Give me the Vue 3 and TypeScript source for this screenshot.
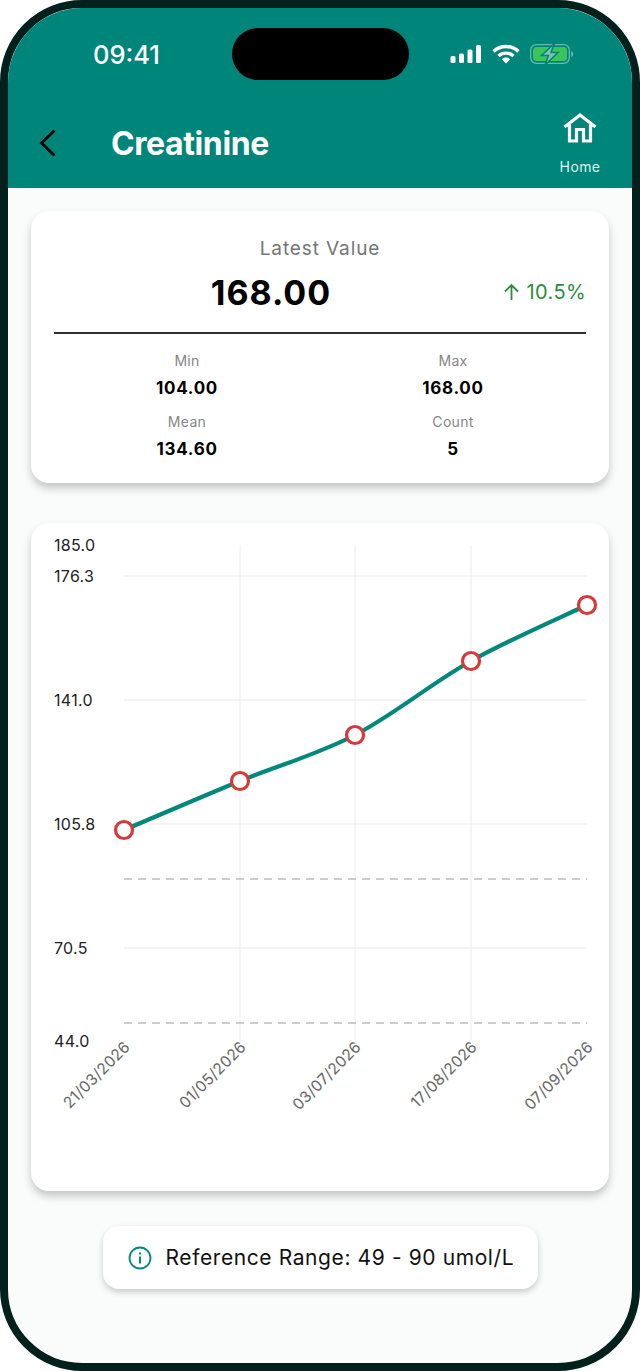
<template>
  <div class="phone">
    <div class="island"></div>
    <header class="top">
      <div class="status">
        <span class="time">09:41</span>
        <div class="status-icons">
          <svg width="32" height="20" viewBox="0 0 32 20">
            <rect x="0.5" y="12" width="5" height="7" rx="1.5" fill="#fff" />
            <rect x="9" y="9.5" width="5" height="9.5" rx="1.5" fill="#fff" />
            <rect x="17.5" y="5.5" width="5" height="13.5" rx="1.5" fill="#fff" />
            <rect x="26" y="1" width="5" height="18" rx="1.5" fill="#fff" />
          </svg>
          <svg width="28" height="20" viewBox="0 0 28 20">
            <path d="M1.5 7.5C8.5 .8 19.5 .8 26.5 7.5" fill="none" stroke="#fff" stroke-width="3.4" />
            <path d="M6.5 12C10.8 8.2 17.2 8.2 21.5 12" fill="none" stroke="#fff" stroke-width="3.4" />
            <path d="M9.8 15.2C12.3 13 15.7 13 18.2 15.2L14 19.6Z" fill="#fff" />
          </svg>
          <svg width="44" height="22" viewBox="0 0 44 22">
            <rect x="0.7" y="1.7" width="38.6" height="18.6" rx="5.5" fill="none" stroke="#6cb8ab" stroke-width="1.3" />
            <rect x="3" y="4" width="34" height="14" rx="3.5" fill="#3cc35a" />
            <path d="M41.2 8v6c1.2-.4 2-1.6 2-3s-.8-2.600-2-3Z" fill="#6cb8ab" />
            <path d="M24.500 0.500 11.500 12.500h7l-3.500 9.500 13-12.500h-7Z" fill="#7fc2b4" stroke="#00857a" stroke-width="1.500" />
          </svg>
        </div>
      </div>
      <div class="nav">
        <svg class="back" width="20" height="30" viewBox="0 0 20 30">
          <path d="M16.500 2.500 3.500 15l13 12.500" fill="none" stroke="#000" stroke-width="2.800" />
        </svg>
        <h1>Creatinine</h1>
        <div class="home">
          <svg width="36" height="32" viewBox="0 0 36 32">
            <path d="M2.500 15 18 3l15.500 12M7.500 12.500v16.500h7v-11.500h7v11.500h7V12.500" fill="none" stroke="#fff" stroke-width="3.200" stroke-linejoin="miter" />
          </svg>
          <span>Home</span>
        </div>
      </div>
    </header>

    <main class="content">
      <section class="card summary">
        <div class="latest-label">Latest Value</div>
        <div class="latest-row">
          <span class="latest-value">168.00</span>
          <span class="trend">
            <svg width="17" height="18" viewBox="0 0 17 18">
              <path d="M8.500 17V2M2 8.500 8.500 2l6.500 6.500" fill="none" stroke="#2e8b3d" stroke-width="1.800" />
            </svg>
            10.5%
          </span>
        </div>
        <div class="stats">
          <div v-for="s in stats" :key="s.label" class="stat">
            <span class="stat-label">{{ s.label }}</span>
            <span class="stat-value">{{ s.value }}</span>
          </div>
        </div>
      </section>

      <section class="card chart">
        <svg width="578" height="668" viewBox="0 0 578 668">
          <line v-for="y in gridY" :key="y" :x1="93" :x2="556" :y1="y" :y2="y" stroke="#f0f0f0" stroke-width="1.500" />
          <line v-for="x in gridX" :key="x" :x1="x" :x2="x" y1="22" y2="518" stroke="#ececec" stroke-width="1" />
          <line v-for="y in dashY" :key="y" x1="93" x2="556" :y1="y" :y2="y" stroke="#bdbdbd" stroke-width="1.300" stroke-dasharray="8 6" />
          <text v-for="t in yLabels" :key="t.label" x="23" :y="t.y + 5.500" class="y-label">{{ t.label }}</text>
          <path :d="linePath" fill="none" stroke="#00897b" stroke-width="4.200" />
          <circle v-for="p in points" :key="p.x" :cx="p.x" :cy="p.y" r="8.500" fill="#fff" stroke="#d8393a" stroke-width="3.200" />
          <text
            v-for="d in dates"
            :key="d.label"
            class="x-label"
            text-anchor="end"
            :transform="`translate(${d.x} 525) rotate(-45)`"
          >{{ d.label }}</text>
        </svg>
      </section>

      <div class="range">
        <svg width="24" height="24" viewBox="0 0 24 24">
          <circle cx="12" cy="12" r="10.500" fill="none" stroke="#00897b" stroke-width="1.800" />
          <rect x="11" y="10.500" width="2" height="7" fill="#00897b" />
          <rect x="11" y="6.500" width="2" height="2" fill="#00897b" />
        </svg>
        <span>Reference Range: 49 - 90 umol/L</span>
      </div>
    </main>
  </div>
</template>

<script setup lang="ts">
import { computed } from "vue";

const stats = [
  { label: "Min", value: "104.00" },
  { label: "Max", value: "168.00" },
  { label: "Mean", value: "134.60" },
  { label: "Count", value: "5" },
];

// chart coordinates are relative to the card
const points = [
  { x: 93, y: 307 },
  { x: 209, y: 258 },
  { x: 324, y: 212 },
  { x: 440, y: 138 },
  { x: 556, y: 82 },
];
const gridY = [53, 177, 301, 425];
const gridX = [209, 324, 440];
const dashY = [356, 500];
const yLabels = [
  { label: "185.0", y: 22 },
  { label: "176.3", y: 53 },
  { label: "141.0", y: 177 },
  { label: "105.8", y: 301 },
  { label: "70.5", y: 425 },
  { label: "44.0", y: 518 },
];
const dates = [
  { label: "21/03/2026", x: 100 },
  { label: "01/05/2026", x: 216 },
  { label: "03/07/2026", x: 331 },
  { label: "17/08/2026", x: 447 },
  { label: "07/09/2026", x: 563 },
];

const linePath = computed(() => {
  let d = `M${points[0].x} ${points[0].y}`;
  for (let i = 0; i < points.length - 1; i++) {
    const p0 = points[Math.max(i - 1, 0)];
    const p1 = points[i];
    const p2 = points[i + 1];
    const p3 = points[Math.min(i + 2, points.length - 1)];
    const c1x = p1.x + (p2.x - p0.x) / 6;
    const c1y = p1.y + (p2.y - p0.y) / 6;
    const c2x = p2.x - (p3.x - p1.x) / 6;
    const c2y = p2.y - (p3.y - p1.y) / 6;
    d += ` C${c1x} ${c1y} ${c2x} ${c2y} ${p2.x} ${p2.y}`;
  }
  return d;
});
</script>

<style>
html,
body {
  background: #fff;
}
</style>

<style scoped>
.phone {
  position: relative;
  box-sizing: border-box;
  width: 640px;
  height: 1371px;
  border: 8px solid #04201c;
  border-radius: 82px;
  overflow: hidden;
  background: #fafcfc;
  font-family: Inter, "Liberation Sans", sans-serif;
  color: #000;
}
.island {
  position: absolute;
  top: 20px;
  left: 224px;
  width: 177px;
  height: 52px;
  border-radius: 26px;
  background: #000;
}
.top {
  height: 180px;
  background: #00857a;
  color: #fff;
}
.status {
  display: flex;
  justify-content: space-between;
  align-items: center;
  height: 32px;
  padding: 30px 58px 0 85px;
}
.time {
  font-size: 25.500px;
  font-weight: 500;
}
.status-icons {
  display: flex;
  align-items: center;
  gap: 10px;
}
.nav {
  display: flex;
  align-items: center;
  height: 90px;
  margin-top: 28px;
  padding: 0 22px 0 30px;
}
.back {
  flex: none;
  margin-right: 53px;
}
.nav h1 {
  flex: 1;
  margin: 0;
  font-size: 32px;
  font-weight: 700;
  letter-spacing: -0.4px;
}
.home {
  display: flex;
  flex-direction: column;
  align-items: center;
  gap: 14px;
  width: 60px;
  font-size: 14px;
  line-height: 17px;
  letter-spacing: 0.4px;
  color: #dff3ef;
}
.content {
  display: flex;
  flex-direction: column;
  align-items: center;
  padding: 23px 23px 0;
}
.card {
  width: 578px;
  background: #fff;
  border-radius: 18px;
  box-shadow: 0 5px 9px rgba(0, 0, 0, 0.22);
}
.summary {
  box-sizing: border-box;
  height: 272px;
  padding: 26px 23px 0;
}
.latest-label {
  text-align: center;
  font-size: 19px;
  letter-spacing: 0.9px;
  color: #757575;
}
.latest-row {
  position: relative;
  display: flex;
  justify-content: center;
  align-items: center;
  height: 48px;
  margin-top: 8px;
  padding-right: 98px;
  border-bottom: 2px solid #2f2f2f;
  padding-bottom: 16px;
}
.latest-value {
  font-size: 34px;
  font-weight: 700;
  letter-spacing: 1px;
}
.trend {
  position: absolute;
  right: 0;
  top: 12px;
  display: flex;
  align-items: center;
  gap: 6px;
  font-size: 20px;
  letter-spacing: 0.4px;
  color: #2e8b3d;
}
.stats {
  display: grid;
  grid-template-columns: 1fr 1fr;
  row-gap: 14px;
  margin-top: 18px;
}
.stat {
  display: flex;
  flex-direction: column;
  align-items: center;
  gap: 8px;
}
.stat-label {
  font-size: 14px;
  line-height: 18px;
  letter-spacing: 0.3px;
  color: #868686;
}
.stat-value {
  font-size: 17px;
  line-height: 21px;
  font-weight: 700;
  letter-spacing: 0.7px;
}
.chart {
  height: 668px;
  margin-top: 40px;
}
.chart svg {
  display: block;
}
.y-label {
  font-size: 16px;
  letter-spacing: 0.3px;
  fill: #222;
}
.x-label {
  font-size: 15.500px;
  letter-spacing: 0.2px;
  fill: #666;
}
.range {
  display: flex;
  align-items: center;
  gap: 14px;
  box-sizing: border-box;
  width: 435px;
  height: 63px;
  margin-top: 35px;
  padding-left: 25px;
  background: #fff;
  border-radius: 16px;
  box-shadow: 0 3px 6px rgba(0, 0, 0, 0.2);
  font-size: 21px;
  letter-spacing: 0.6px;
  color: #111;
}
</style>
